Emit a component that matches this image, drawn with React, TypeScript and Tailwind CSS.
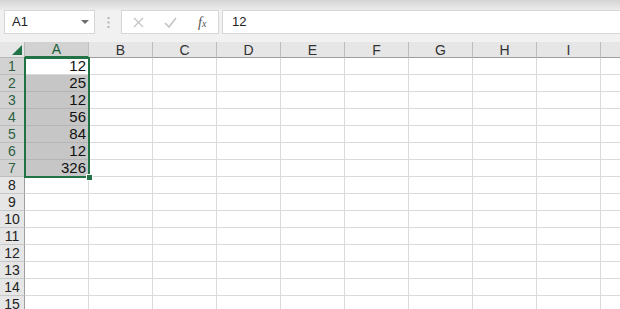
import React from "react";

const cols = ["A", "B", "C", "D", "E", "F", "G", "H", "I"];
const data: Record<number, string> = { 1: "12", 2: "25", 3: "12", 4: "56", 5: "84", 6: "12", 7: "326" };
const rows = Array.from({ length: 15 }, (_, i) => i + 1);

export default function App() {
  return (
    <div className="relative w-[620px] h-[309px] overflow-hidden bg-white" style={{ fontFamily: '"Liberation Sans", "Noto Sans CJK SC", sans-serif' }}>
      {/* toolbar */}
      <div className="h-[42px] bg-[#f1f1f1] flex flex-col">
        <div className="h-[10px] bg-gradient-to-b from-[#d4d4d4] to-[#ececec]" />
        <div className="flex items-start h-[32px]">
          <div className="ml-[4px] w-[91px] h-[24px] bg-white border border-[#d6d6d6] flex items-center justify-between pl-[7px] pr-[5px]">
            <span className="text-[13px] text-[#222]">A1</span>
            <svg width="8" height="5" viewBox="0 0 8 5"><path d="M0 0 L8 0 L4 4 Z" fill="#6d6d6d" /></svg>
          </div>
          <div className="w-[26px] h-[24px] flex items-center justify-center">
            <svg width="3" height="11" viewBox="0 0 3 11">
              <rect x="0.5" y="0" width="2" height="2" fill="#b5b5b5" />
              <rect x="0.5" y="4.5" width="2" height="2" fill="#b5b5b5" />
              <rect x="0.5" y="9" width="2" height="2" fill="#b5b5b5" />
            </svg>
          </div>
          <div className="w-[98px] h-[24px] bg-white border border-[#d6d6d6] flex items-center">
            <div className="w-[32px] flex justify-center ml-[1px]">
              <svg width="11" height="11" viewBox="0 0 11 11"><path d="M1 1 L10 10 M10 1 L1 10" stroke="#c3c3c3" strokeWidth="1.2" /></svg>
            </div>
            <div className="w-[32px] flex justify-center">
              <svg width="13" height="11" viewBox="0 0 13 11"><path d="M1 6 L5 10 L12 1" stroke="#c3c3c3" strokeWidth="1.6" fill="none" /></svg>
            </div>
            <div className="w-[32px] flex justify-center">
              <span className="text-[14px] italic text-[#555]" style={{ fontFamily: '"Liberation Serif", serif' }}>f<span className="text-[10px]">x</span></span>
            </div>
          </div>
          <div className="ml-[3px] flex-1 h-[24px] bg-white border-y border-l border-[#d6d6d6] flex items-center pl-[9px]">
            <span className="text-[13px] text-[#222]">12</span>
          </div>
        </div>
      </div>

      {/* grid */}
      <div className="grid grid-cols-[25px_repeat(9,64px)_1fr]" style={{ gridTemplateRows: "16px repeat(15, 17px)" }}>
        {/* header row */}
        <div className="bg-[#e6e6e6] border-r border-b border-[#b8b8b8] relative">
          <svg className="absolute right-[2px] bottom-[2px]" width="10" height="10" viewBox="0 0 10 10"><path d="M10 0 L10 10 L0 10 Z" fill="#217346" /></svg>
        </div>
        {cols.map((c) => (
          <div
            key={c}
            className={
              c === "A"
                ? "bg-[#d2d2d2] border-r border-[#c0c0c0] border-b-2 border-b-[#217346] flex items-center justify-center text-[14px] text-[#1d5e3a] leading-none"
                : "bg-[#e6e6e6] border-r border-b border-[#bdbdbd] border-b-[#9e9e9e] flex items-center justify-center text-[14px] text-[#333] leading-none"
            }
          >
            {c}
          </div>
        ))}
        <div className="bg-[#e6e6e6] border-b border-[#9e9e9e]" />

        {rows.map((r) => (
          <React.Fragment key={r}>
            <div
              className={
                r <= 7
                  ? "bg-[#d2d2d2] border-r border-r-[#9e9e9e] border-b border-b-[#bdbdbd] flex items-center justify-center text-[14px] text-[#2d5f41] leading-none"
                  : "bg-[#e6e6e6] border-r border-r-[#9e9e9e] border-b border-b-[#c9c9c9] flex items-center justify-center text-[14px] text-[#222] leading-none"
              }
            >
              {r}
            </div>
            {cols.map((c) => (
              <div
                key={c}
                className={
                  c === "A" && r >= 2 && r <= 7
                    ? "bg-[#c6c6c6] border-r border-b border-[#b5b5b5] flex items-end justify-end pr-[2px] text-[15px] text-[#111] leading-[16px]"
                    : "bg-white border-r border-b border-[#dadada] flex items-end justify-end pr-[2px] text-[15px] text-[#111] leading-[16px]"
                }
              >
                {c === "A" ? data[r] ?? "" : ""}
              </div>
            ))}
            <div className="bg-white border-b border-[#dadada]" />
          </React.Fragment>
        ))}
      </div>

      {/* selection overlay */}
      <div className="absolute left-[24px] top-[57px] w-[66px] h-[121px] border-2 border-[#217346] pointer-events-none" />
      <div className="absolute left-[86px] top-[174px] w-[7px] h-[7px] bg-[#217346] border border-white" />
    </div>
  );
}
